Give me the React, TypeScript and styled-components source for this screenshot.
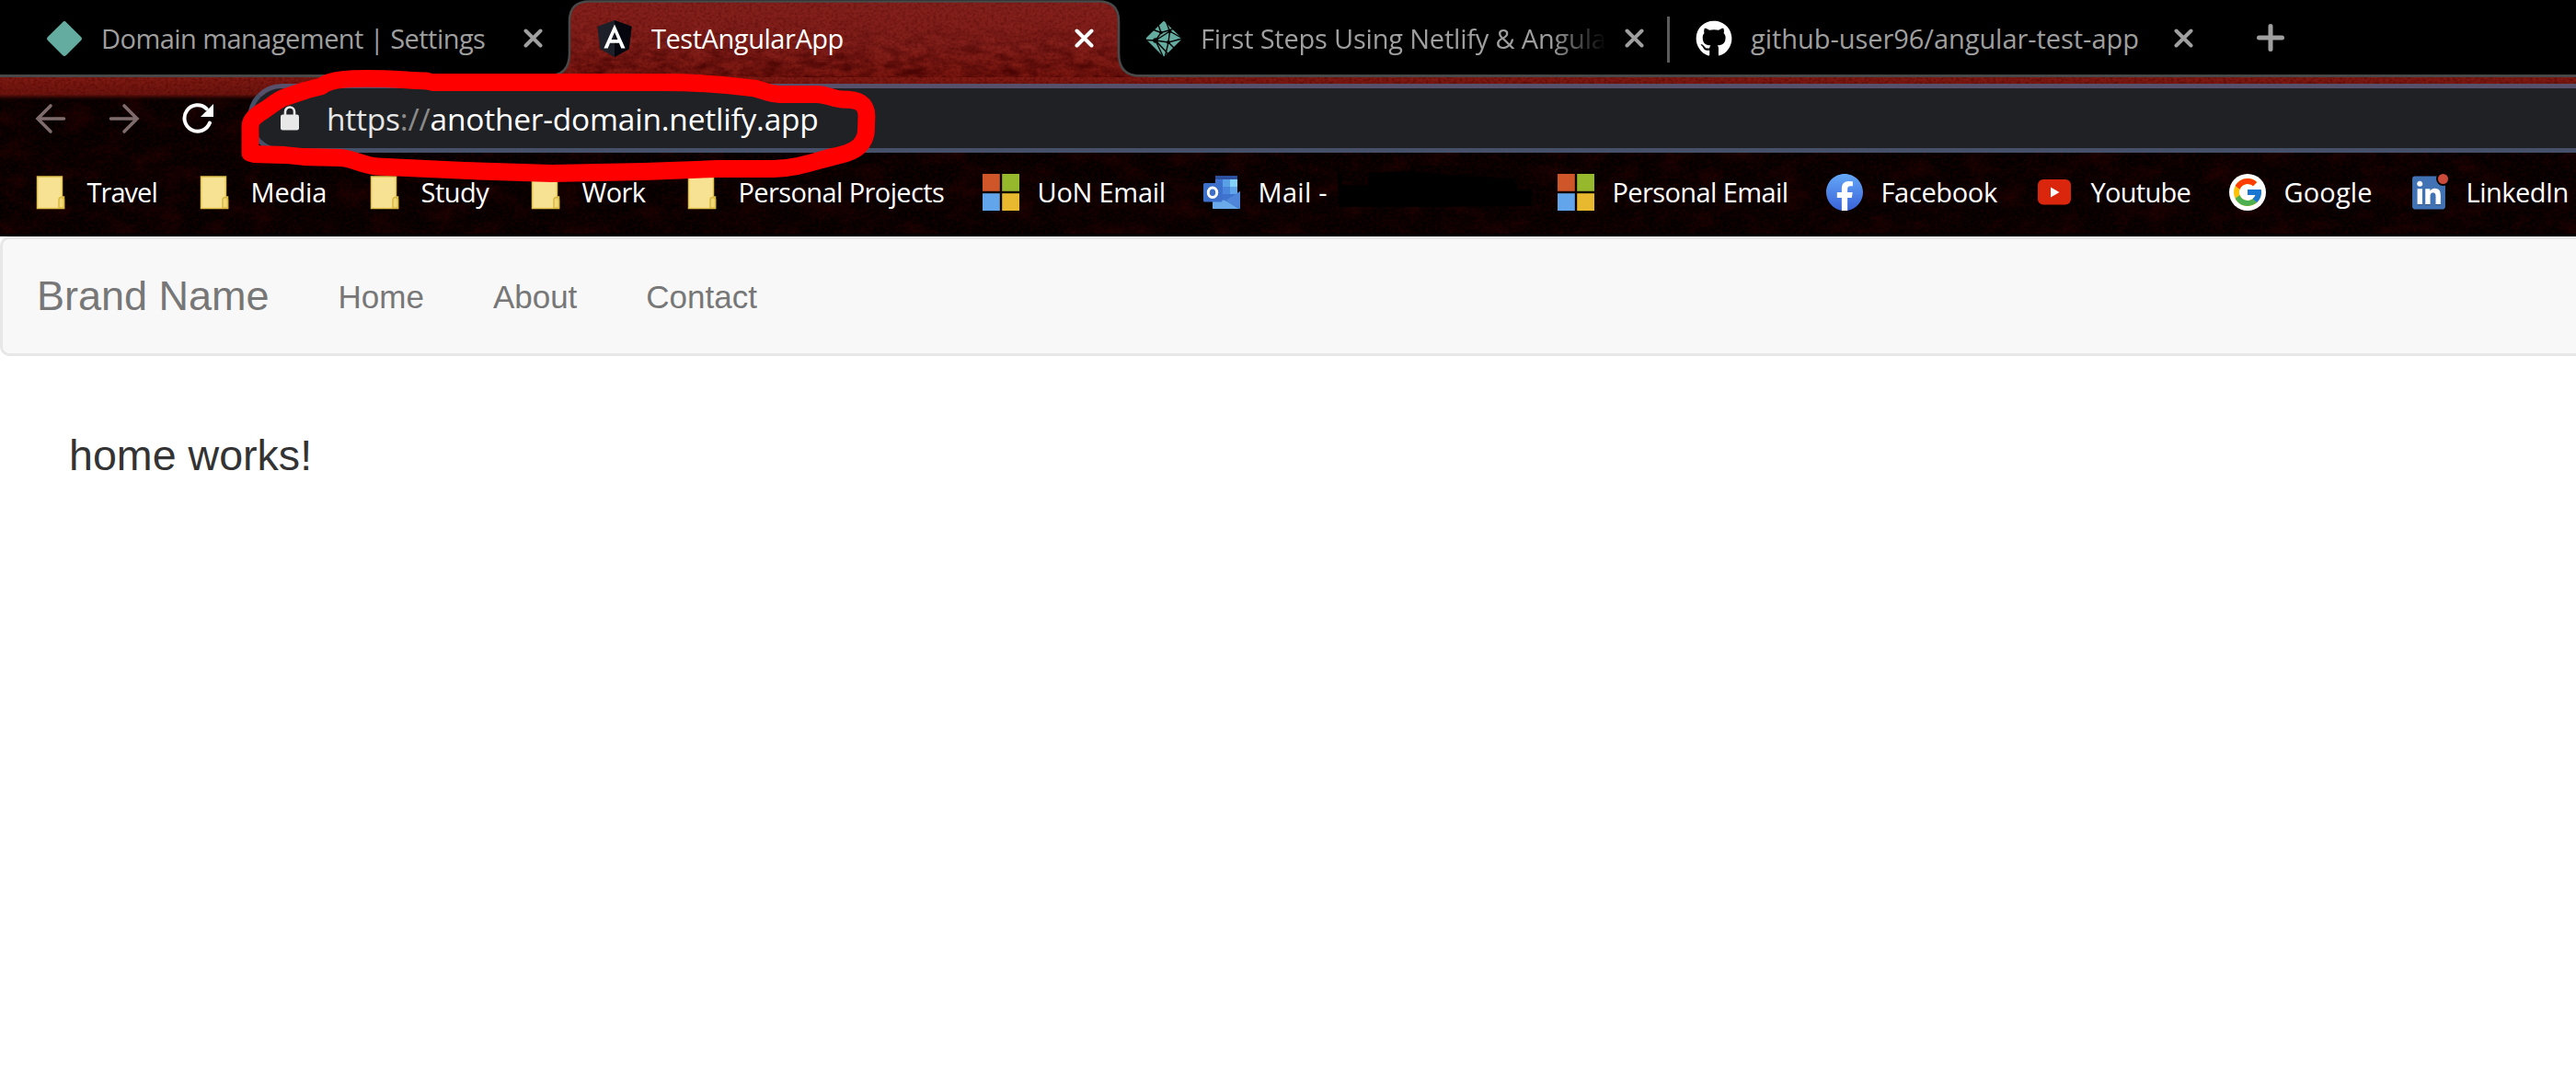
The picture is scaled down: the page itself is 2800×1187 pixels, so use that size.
import React from "react";
import styled, { createGlobalStyle } from "styled-components";
import { FcGoogle } from "react-icons/fc";
import { FaGithub, FaLinkedin } from "react-icons/fa";

const GlobalStyle = createGlobalStyle`
  *, *::before, *::after { box-sizing: border-box; }
  html, body { margin: 0; padding: 0; background: #fff; }
  body { overflow: hidden; }
`;

const uiFont = `"Open Sans", "Noto Sans", sans-serif`;
const pageFont = `"Liberation Sans", Arial, sans-serif`;

const Screen = styled.div`
  width: 2800px;
  height: 1187px;
  overflow: hidden;
  display: flex;
  flex-direction: column;
  background: #fff;
`;

const Chrome = styled.header`
  position: relative;
  isolation: isolate;
  height: 257px;
  flex: none;
  display: flex;
  flex-direction: column;
  background: #0a0101;
  border-bottom: 3px solid #000;
  font-family: ${uiFont};
`;

const Texture = styled.svg`
  position: absolute;
  inset: 0;
  z-index: -1;
`;

const TabStrip = styled.div`
  height: 84px;
  flex: none;
  display: flex;
  background: #000;
  border-bottom: 3px solid #484848;
`;

const Tab = styled.div<{ $width: number; $start: number; $active?: boolean }>`
  position: relative;
  isolation: isolate;
  width: ${(p) => p.$width}px;
  height: 84px;
  padding: 0 28px 1px ${(p) => p.$start}px;
  flex: none;
  display: flex;
  align-items: center;
  color: ${(p) => (p.$active ? "#fff" : "#9f9f9f")};
`;

const TabShape = styled.svg`
  position: absolute;
  left: -30px;
  top: 0;
  z-index: -1;
`;

const TabIcon = styled.span`
  width: 40px;
  height: 40px;
  margin-right: 19px;
  flex: none;
  display: grid;
  place-items: center;
`;

const TabLabel = styled.span<{ $track: number; $fade?: boolean }>`
  flex: 1;
  min-width: 0;
  margin-right: 20px;
  padding-left: 1px;
  overflow: hidden;
  white-space: nowrap;
  font-size: 29px;
  line-height: 44px;
  letter-spacing: ${(p) => p.$track}px;
  ${(p) => p.$fade && "mask-image: linear-gradient(90deg, #000 calc(100% - 60px), transparent);"}
`;

const Separator = styled.i`
  width: 3px;
  height: 50px;
  margin-top: 18px;
  margin-left: -3px;
  flex: none;
  background: #5c5c5c;
`;

const NewTab = styled.div`
  display: flex;
  align-items: center;
  padding-left: 41px;
  color: #9f9f9f;
`;

const Toolbar = styled.div`
  height: 82px;
  flex: none;
  display: flex;
  align-items: flex-start;
  padding: 7px 0 0 35px;
`;

const NavButton = styled.span<{ $dim?: boolean }>`
  width: 40px;
  height: 75px;
  margin-right: 40px;
  display: grid;
  place-items: center;
  color: ${(p) => (p.$dim ? "#7d6c6b" : "#fff")};
`;

const AddressBar = styled.div`
  flex: 1;
  height: 75px;
  margin: 0 -60px 0 -6px;
  display: flex;
  align-items: center;
  padding: 0 0 0 31px;
  border: 5px solid #465068;
  border-top-color: #56506a;
  border-radius: 38px;
  background: #202124;
`;

const Url = styled.span`
  margin-left: 30px;
  padding-top: 1px;
  font-size: 33.5px;
  line-height: 44px;
  letter-spacing: -0.22px;
  white-space: nowrap;
  color: #fff;
`;
const UrlScheme = styled.span`color: #e6e6e6;`;
const UrlSlashes = styled.span`color: #8b8b8b;`;

const Bookmarks = styled.nav`
  height: 86px;
  flex: none;
  display: flex;
  align-items: center;
  padding: 0 0 0 35px;
`;

const Bookmark = styled.span<{ $width: number; $track: number }>`
  width: ${(p) => p.$width}px;
  flex: none;
  display: flex;
  align-items: center;
  gap: 19.5px;
  color: #fff;
  font-size: 29px;
  line-height: 40px;
  letter-spacing: ${(p) => p.$track}px;
  white-space: nowrap;
`;

const BookmarkIcon = styled.span`
  width: 40px;
  height: 40px;
  flex: none;
  display: grid;
  place-items: center;
`;

const RedactedName = styled.svg`
  margin: -6px 0 0 -9px;
  flex: none;
`;

const Scribble = styled.svg`
  position: absolute;
  left: 0;
  top: 0;
  pointer-events: none;
`;

const GoogleDisc = styled.span`
  width: 40px;
  height: 40px;
  border-radius: 50%;
  display: grid;
  place-items: center;
  background: #fff;
`;

const Page = styled.main`
  flex: 1;
  font-family: ${pageFont};
  background: #fff;
`;

const NavBar = styled.nav`
  height: 130px;
  margin-right: -20px;
  display: flex;
  align-items: center;
  padding: 0 0 0 37px;
  background: #f8f8f8;
  border: 3px solid #e7e7e7;
  border-radius: 10px;
  color: #777;
`;

const Brand = styled.span`
  width: 327.5px;
  font-size: 45px;
  line-height: 50px;
  white-space: nowrap;
`;

const NavLinks = styled.div`
  display: flex;
  gap: 75px;
  padding-top: 1px;
  font-size: 35px;
  line-height: 50px;
`;

const Content = styled.p`
  margin: 0;
  padding: 82px 0 0 75px;
  font-size: 46.6px;
  line-height: 52px;
  color: #333;
`;

function Filters() {
  return (
    <defs>
      <filter id="grain" x="0" y="0" width="100%" height="100%" colorInterpolationFilters="sRGB">
        <feTurbulence type="fractalNoise" baseFrequency="0.3 0.36" numOctaves={3} seed={4} />
        <feColorMatrix values="0 0 0 0 0.30  0 0 0 0 0.01  0 0 0 0 0.0  2.6 0 0 0 -1.05" />
      </filter>
      <filter id="shade" x="0" y="0" width="100%" height="100%" colorInterpolationFilters="sRGB">
        <feTurbulence type="fractalNoise" baseFrequency="0.05 0.12" numOctaves={4} seed={21} />
        <feColorMatrix values="0 0 0 0 0.24  0 0 0 0 0.0  0 0 0 0 0.0  0 2.4 0 0 -0.85" />
      </filter>
      <filter id="blotch" x="0" y="0" width="100%" height="100%" colorInterpolationFilters="sRGB">
        <feTurbulence type="fractalNoise" baseFrequency="0.03 0.05" numOctaves={5} seed={9} />
        <feColorMatrix values="0 0 0 0 0.20  0 0 0 0 0.01  0 0 0 0 0.01  0 2 0 0 -0.85" />
      </filter>
      <linearGradient id="band" x1="0" y1="0" x2="0" y2="1">
        <stop offset="0" stopColor="#7e1a13" />
        <stop offset="0.72" stopColor="#6b140e" />
        <stop offset="1" stopColor="#0a0101" stopOpacity="0" />
      </linearGradient>
      <linearGradient id="tabFill" x1="0" y1="0" x2="0" y2="1">
        <stop offset="0" stopColor="#82201c" />
        <stop offset="0.6" stopColor="#84201b" />
        <stop offset="1" stopColor="#78160f" />
      </linearGradient>
      <linearGradient id="shadeFade" x1="0" y1="0" x2="0" y2="1">
        <stop offset="0.2" stopColor="#000" />
        <stop offset="1" stopColor="#fff" />
      </linearGradient>
      <mask id="shadeMask">
        <rect width="660" height="84" fill="url(#shadeFade)" />
      </mask>
    </defs>
  );
}

function ChromeTexture() {
  return (
    <Texture width="2800" height="254" aria-hidden>
      <Filters />
      <rect width="2800" height="254" fill="#050000" />
      <rect width="2800" height="254" filter="url(#blotch)" opacity="0.5" />
      <rect width="2800" height="254" filter="url(#grain)" opacity="0.25" />
      <rect y="84" width="2800" height="26" fill="url(#band)" />
      <rect y="84" width="2800" height="22" filter="url(#grain)" opacity="0.5" />
    </Texture>
  );
}

const TAB_PATH =
  "M0 84V82.5H8Q31.500 82 31.500 58V23Q31.500 1.500 53 1.500H606Q628 1.500 628 23V58Q628 82.500 651 82.500H660V84";

function ActiveShape() {
  return (
    <TabShape width="660" height="92" viewBox="0 0 660 92" aria-hidden>
      <clipPath id="tabClip">
        <path d={TAB_PATH} />
      </clipPath>
      <g clipPath="url(#tabClip)">
        <rect width="660" height="84" fill="url(#tabFill)" />
        <rect width="660" height="84" filter="url(#grain)" opacity="0.35" />
        <g mask="url(#shadeMask)">
          <rect width="660" height="84" filter="url(#shade)" opacity="0.8" />
        </g>
      </g>
      <path d="M0 82.500H8Q31 82 31 58V23Q31 1.500 53 1.500H606Q628 1.500 628 23V58Q628 82.500 651 82.500H660" fill="none" stroke="#484848" strokeWidth="2.600" />
    </TabShape>
  );
}

const CloseIcon = () => (
  <svg width="21" height="21" viewBox="0 0 21 21">
    <path d="M2.500 2.500l16 16M18.500 2.500l-16 16" stroke="currentColor" strokeWidth="4" strokeLinecap="round" />
  </svg>
);

const PlusIcon = () => (
  <svg width="30" height="30" viewBox="0 0 30 30">
    <path d="M15 2.500v25M2.500 15h25" stroke="currentColor" strokeWidth="5" strokeLinecap="round" />
  </svg>
);

const Diamond = () => (
  <svg width="40" height="40" viewBox="0 0 40 40">
    <path d="M18 2.200Q20 0 22 2.200L38 18Q40 20 38 22L22 38Q20 40 18 38L2 22Q0 20 2 18Z" fill="#64aba0" />
  </svg>
);

const NetlifyMark = () => (
  <svg width="40" height="40" viewBox="0 0 40 40">
    <path d="M18.500 2Q20 0 21.500 2L38.500 18.500Q40 20 38.500 21.500L21.500 38.500Q20 40 18.500 38.500L1.500 21.500Q0 20 1.500 18.500Z" fill="#64aba0" />
    <g fill="none" stroke="#000" strokeWidth="1.400">
      <path d="M9 10.500L17 13.500L30 9.500M22.500 1.500L26.500 12L25 24L21.500 39M0 21.500L11 22L25 24L40 20M17 13.500L11 22L19 39M11 22L26.500 12L39 19M25 24L31 30M14 5L17 13.500M11 22L25 37" />
    </g>
    <circle cx="11" cy="22" r="2.800" />
    <circle cx="17" cy="13.500" r="1.800" />
    <circle cx="26.500" cy="12" r="2" />
    <circle cx="25" cy="24" r="2" />
  </svg>
);

const AngularMark = () => (
  <svg width="40" height="40" viewBox="25 30 200 200">
    <path d="M125 30L31.900 63.200l14.200 123.100L125 230l78.900-43.700 14.200-123.100z" fill="#1d2029" />
    <path d="M125 30v200l78.900-43.700 14.200-123.100z" fill="#05060d" />
    <path d="M125 52.100L66.800 182.600h21.700l11.700-29.200h49.400l11.700 29.200H183L125 52.100zm17 83.300h-34l17-40.900z" fill="#fff" />
  </svg>
);

const BackIcon = () => (
  <svg width="34" height="34" viewBox="0 0 34 34" fill="none" stroke="currentColor" strokeWidth="3.600" strokeLinecap="round">
    <path d="M31.500 17H3M17 3L3 17l14 14" />
  </svg>
);
const ForwardIcon = () => (
  <svg width="34" height="34" viewBox="0 0 34 34" fill="none" stroke="currentColor" strokeWidth="3.600" strokeLinecap="round">
    <path d="M2.500 17h28.500M17 3L31 17 17 31" />
  </svg>
);
const ReloadIcon = () => (
  <svg width="36" height="34" viewBox="0 0 36 34">
    <path d="M27.500 6.200A14.200 14.200 0 1 0 31 21.500" fill="none" stroke="currentColor" strokeWidth="4" strokeLinecap="round" />
    <path d="M35 1v14H21z" fill="currentColor" />
  </svg>
);
const LockIcon = () => (
  <svg width="20" height="27" viewBox="0 0 20 27">
    <path d="M5 12V6.500a5 5 0 0 1 10 0V12" fill="none" stroke="#e8e8e8" strokeWidth="2.600" />
    <rect y="9.500" width="20" height="17" rx="2.300" fill="#e8e8e8" />
  </svg>
);

const Folder = () => (
  <svg width="40" height="40" viewBox="0 0 40 40">
    <path d="M5.500 3H32.500V25H34.500V37.500H5.500Z" fill="#f7e294" stroke="#dfc04b" strokeWidth="1.500" />
    <path d="M29 37V28.500Q29 25.500 31.700 25.500Q34.500 25.500 34.500 28.500V37Z" fill="#f1d878" stroke="#d9b83f" strokeWidth="1.500" />
  </svg>
);

const Windows = () => (
  <svg width="40" height="40" viewBox="0 0 40 40">
    <path fill="#cf5629" d="M0 0h18.800v18.800H0z" />
    <path fill="#95b82d" d="M21.200 0H40v18.800H21.200z" />
    <path fill="#63a5eb" d="M0 21.200h18.800V40H0z" />
    <path fill="#e8b92e" d="M21.200 21.200H40V40H21.200z" />
  </svg>
);

const Outlook = () => (
  <svg width="40" height="40" viewBox="0 0 40 40">
    <path fill="#3f73cf" d="M13 2h24v27H13z" />
    <path fill="#2c4f9e" d="M13 2h24v4H13z" />
    <path fill="#5aa0e6" d="M21 6h8v8h-8z" />
    <path fill="#83d2f9" d="M29 6h8v8h-8z" />
    <path fill="#4a86dc" d="M21 14h8v8h-8z" />
    <path fill="#5fa5ea" d="M29 14h8v8h-8z" />
    <path fill="#3460b4" d="M10 22l15 8 15-11v19H10z" />
    <path fill="#4f86da" d="M40 19v19L24 29z" />
    <path fill="#6aa9ea" d="M10 38V26l14 3 15 9z" />
    <rect y="10" width="20.500" height="20.500" rx="1.500" fill="#3d70cb" />
    <ellipse cx="10" cy="20.300" rx="4.700" ry="5.300" fill="none" stroke="#fff" strokeWidth="3" />
  </svg>
);

const Facebook = () => (
  <svg width="40" height="40" viewBox="0 0 24 24">
    <defs>
      <linearGradient id="fb" x1="0" y1="0" x2="0" y2="1">
        <stop offset="0" stopColor="#64a8f8" />
        <stop offset="1" stopColor="#3a62d8" />
      </linearGradient>
    </defs>
    <path d="M6.500 4h11.500v12l-4 7.950h-4L6.500 16z" fill="#fff" />
    <path fill="url(#fb)" d="M24 12.073c0-6.627-5.373-12-12-12s-12 5.373-12 12c0 5.990 4.388 10.954 10.125 11.854v-8.385H7.078v-3.470h3.047V9.430c0-3.007 1.792-4.669 4.533-4.669 1.312 0 2.686.235 2.686.235v2.953H15.830c-1.491 0-1.956.925-1.956 1.874v2.250h3.328l-.532 3.470h-2.796v8.385C19.612 23.027 24 18.062 24 12.073z" />
  </svg>
);

const Youtube = () => (
  <svg width="40" height="40" viewBox="0 0 40 40">
    <rect x="2" y="6" width="36" height="27.500" rx="6" fill="#d9260d" />
    <path d="M16 14.500v11l9.500-5.500z" fill="#fff" />
  </svg>
);

const LinkedinWrap = styled.span`
  position: relative;
  width: 40px;
  height: 40px;
`;
const LinkedinMark = styled.span`
  display: block;
  width: 36px;
  height: 36px;
  margin: 2px 0 0 1px;
  background: linear-gradient(#fff, #fff) center / 30px 30px no-repeat;
  color: #4173b4;
  svg { display: block; width: 36px; height: 41px; margin-top: -2.500px; }
`;
const Notice = styled.i`
  position: absolute;
  right: 0;
  top: 0;
  width: 11px;
  height: 11px;
  border-radius: 50%;
  background: #cb4a3a;
  box-shadow: 0 0 0 2px #0a0101;
`;

const Linkedin = () => (
  <LinkedinWrap>
    <LinkedinMark>
      <FaLinkedin />
    </LinkedinMark>
    <Notice />
  </LinkedinWrap>
);

const Google = () => (
  <GoogleDisc>
    <FcGoogle size={36} />
  </GoogleDisc>
);

const bookmarks: { label: string; icon: React.FC; width: number; track: number; redacted?: boolean }[] = [
  { label: "Travel", icon: Folder, width: 178, track: -0.95 },
  { label: "Media", icon: Folder, width: 185, track: -0.2 },
  { label: "Study", icon: Folder, width: 175, track: -0.5 },
  { label: "Work", icon: Folder, width: 170, track: -0.6 },
  { label: "Personal Projects", icon: Folder, width: 325, track: -0.6 },
  { label: "UoN Email", icon: Windows, width: 240, track: -0.25 },
  { label: "Mail -", icon: Outlook, width: 385, track: 0.3, redacted: true },
  { label: "Personal Email", icon: Windows, width: 292, track: -0.6 },
  { label: "Facebook", icon: Facebook, width: 228, track: -0.35 },
  { label: "Youtube", icon: Youtube, width: 210, track: -0.7 },
  { label: "Google", icon: Google, width: 198, track: 0.15 },
  { label: "LinkedIn", icon: Linkedin, width: 179, track: -0.5 },
];

export default function App() {
  return (
    <Screen>
      <GlobalStyle />
      <Chrome>
        <ChromeTexture />
        <TabStrip>
          <Tab $width={618} $start={50}>
            <TabIcon><Diamond /></TabIcon>
            <TabLabel $track={-0.55}>Domain management | Settings</TabLabel>
            <CloseIcon />
          </Tab>
          <Tab $width={599} $start={30} $active>
            <ActiveShape />
            <TabIcon><AngularMark /></TabIcon>
            <TabLabel $track={-0.45}>TestAngularApp</TabLabel>
            <CloseIcon />
          </Tab>
          <Tab $width={598} $start={28}>
            <TabIcon><NetlifyMark /></TabIcon>
            <TabLabel $track={-0.2} $fade>First Steps Using Netlify &amp; Angular</TabLabel>
            <CloseIcon />
          </Tab>
          <Separator />
          <Tab $width={597} $start={28}>
            <TabIcon><FaGithub size={40} color="#fff" /></TabIcon>
            <TabLabel $track={-0.05}>github-user96/angular-test-app</TabLabel>
            <CloseIcon />
          </Tab>
          <NewTab><PlusIcon /></NewTab>
        </TabStrip>
        <Toolbar>
          <NavButton $dim><BackIcon /></NavButton>
          <NavButton $dim><ForwardIcon /></NavButton>
          <NavButton><ReloadIcon /></NavButton>
          <AddressBar>
            <LockIcon />
            <Url>
              <UrlScheme>https</UrlScheme>
              <UrlSlashes>://</UrlSlashes>
              another-domain.netlify.app
            </Url>
          </AddressBar>
        </Toolbar>
        <Bookmarks>
          {bookmarks.map(({ label, icon: Icon, width, track, redacted }) => (
            <Bookmark key={label} $width={width} $track={track}>
              <BookmarkIcon><Icon /></BookmarkIcon>
              {label}
              {redacted && (
                <RedactedName width="214" height="40" viewBox="0 0 214 40" aria-hidden>
                  <path d="M0 3h5v12l29 1V1l44-1 56 5 58 3 3 12h16v18l-100 1H1z" />
                </RedactedName>
              )}
            </Bookmark>
          ))}
        </Bookmarks>
        <Scribble width="960" height="220" viewBox="0 0 960 220" aria-hidden>
          <path
            d="M272 166.500V137C272 130 280 124 287 120C295 115 301 109 309 106L333 98L349 94C354 90 361 87.500 372 86.500C400 83.500 430 86.500 464 88L470 89.500H720C750 89.500 790 92 820 96C830 98 835 102 848 102.500H889C900 103 903 107 914 108C934 108 942 112 942 127C941 140 943 147 937 155C932 163 922 167 907 170C886 175 867 183 841 183.500H780L700 186.500L600 188.500L520 186L410 181C395 180 383 172 370 171.500L330 170.500L310 168.500L276 167.500Z"
            fill="none"
            stroke="#ff0000"
            strokeWidth="18.800"
            strokeLinejoin="round"
          />
        </Scribble>
      </Chrome>
      <Page>
        <NavBar>
          <Brand>Brand Name</Brand>
          <NavLinks>
            <span>Home</span>
            <span>About</span>
            <span>Contact</span>
          </NavLinks>
        </NavBar>
        <Content>home works!</Content>
      </Page>
    </Screen>
  );
}
